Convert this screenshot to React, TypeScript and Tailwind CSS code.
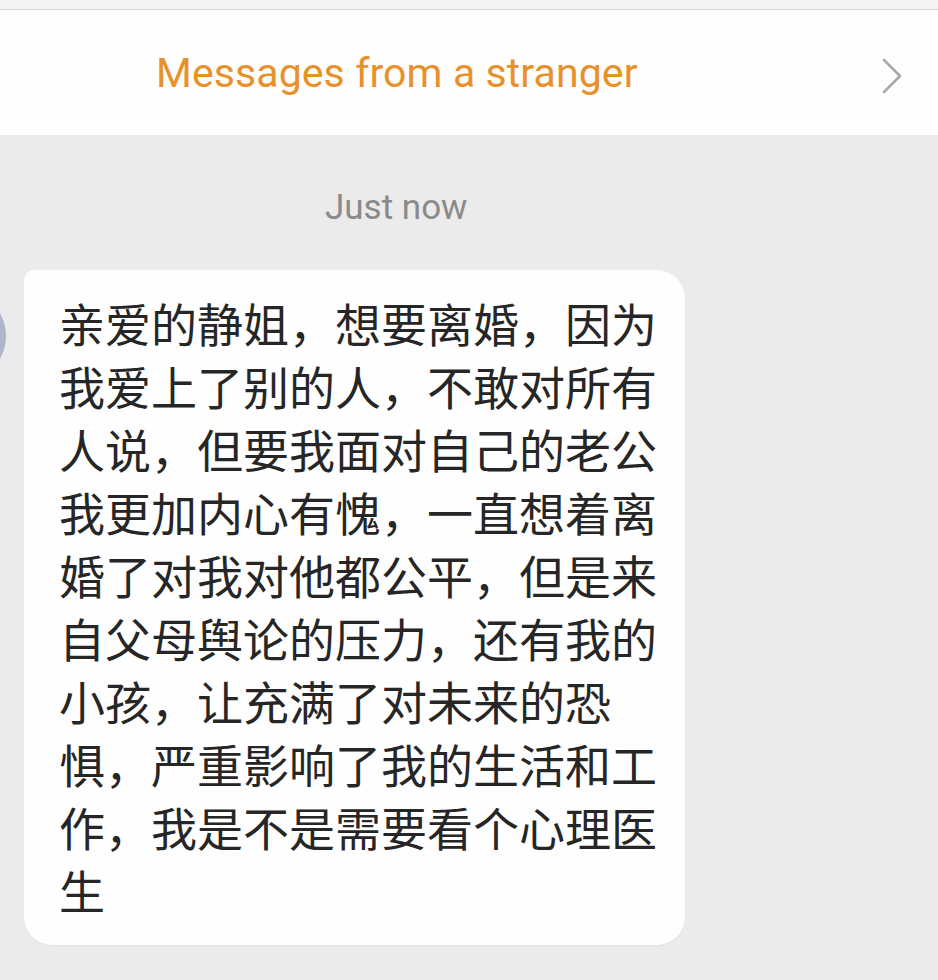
import React from "react";

const lines = [
  "亲爱的静姐，想要离婚，因为",
  "我爱上了别的人，不敢对所有",
  "人说，但要我面对自己的老公",
  "我更加内心有愧，一直想着离",
  "婚了对我对他都公平，但是来",
  "自父母舆论的压力，还有我的",
  "小孩，让充满了对未来的恐",
  "惧，严重影响了我的生活和工",
  "作，我是不是需要看个心理医",
  "生",
];

export default function App() {
  return (
    <div
      className="w-[938px] h-[980px] bg-[#ebebeb] overflow-hidden flex flex-col"
      style={{ fontFamily: '"Noto Sans", "Noto Sans CJK SC", sans-serif' }}
    >
      <div className="h-[10px] bg-[#f4f4f4] border-b border-[#d9d9d9]" />
      <div className="h-[125px] bg-[#fefefe] flex items-center relative">
        <div className="pl-[156px] text-[41px] leading-[50px] text-[#e8912a] tracking-[0.1px]" style={{ fontFamily: '"Roboto", "Noto Sans", sans-serif' }}>
          Messages from a stranger
        </div>
        <svg className="absolute left-[878px] top-[46px]" width="28" height="40" viewBox="0 0 28 40">
          <path d="M6 4 L22 20 L6 36" fill="none" stroke="#a8a8a8" strokeWidth="2.6" strokeLinecap="round" strokeLinejoin="round" />
        </svg>
      </div>
      <div className="h-[95px] flex items-end">
        <span className="ml-[325px] text-[35px] leading-[44px] text-[#8a8a8a]" style={{ fontFamily: '"Roboto", "Noto Sans", sans-serif' }}>Just now</span>
      </div>
      <div className="relative mt-[40px]">
        <div className="absolute left-[-86px] top-[20px] w-[92px] h-[92px] rounded-full bg-[#aeb6c9]" />
        <div className="ml-[24px] w-[661px] bg-[#fefefe] rounded-[28px] rounded-tl-[10px] pl-[35px] pt-[21px] pb-[24px] shadow-[0_1px_2px_rgba(0,0,0,0.04)]">
          {lines.map((l, i) => (
            <div key={i} className="text-[46px] leading-[63px] text-[#262626] whitespace-nowrap" style={{ fontFamily: '"Noto Sans CJK SC", sans-serif' }}>
              {l}
            </div>
          ))}
        </div>
      </div>
    </div>
  );
}
